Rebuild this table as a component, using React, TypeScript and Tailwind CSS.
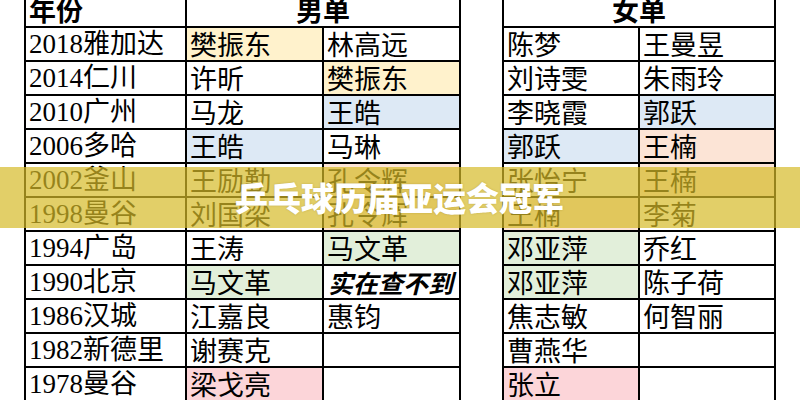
type Fill = 'none' | 'yellow' | 'blue' | 'green' | 'peach' | 'pink'

const fills: Record<Fill, string> = {
  none: 'bg-white',
  yellow: 'bg-[#fff2cc]',
  blue: 'bg-[#dde9f5]',
  green: 'bg-[#e2efda]',
  peach: 'bg-[#fce4d6]',
  pink: 'bg-[#fcd5d9]',
}

type Cell = { name: string; fill?: Fill; note?: boolean }

const rows: { year: string; men: [Cell, Cell]; women: [Cell, Cell] }[] = [
  { year: '2018雅加达', men: [{ name: '樊振东', fill: 'yellow' }, { name: '林高远' }], women: [{ name: '陈梦' }, { name: '王曼昱' }] },
  { year: '2014仁川', men: [{ name: '许昕' }, { name: '樊振东', fill: 'yellow' }], women: [{ name: '刘诗雯' }, { name: '朱雨玲' }] },
  { year: '2010广州', men: [{ name: '马龙' }, { name: '王皓', fill: 'blue' }], women: [{ name: '李晓霞' }, { name: '郭跃', fill: 'blue' }] },
  { year: '2006多哈', men: [{ name: '王皓', fill: 'blue' }, { name: '马琳' }], women: [{ name: '郭跃', fill: 'blue' }, { name: '王楠', fill: 'peach' }] },
  { year: '2002釜山', men: [{ name: '王励勤' }, { name: '孔令辉', fill: 'peach' }], women: [{ name: '张怡宁' }, { name: '王楠', fill: 'peach' }] },
  { year: '1998曼谷', men: [{ name: '刘国梁' }, { name: '孔令辉', fill: 'peach' }], women: [{ name: '王楠', fill: 'peach' }, { name: '李菊' }] },
  { year: '1994广岛', men: [{ name: '王涛' }, { name: '马文革', fill: 'green' }], women: [{ name: '邓亚萍', fill: 'green' }, { name: '乔红' }] },
  { year: '1990北京', men: [{ name: '马文革', fill: 'green' }, { name: '实在查不到', note: true }], women: [{ name: '邓亚萍', fill: 'green' }, { name: '陈子荷' }] },
  { year: '1986汉城', men: [{ name: '江嘉良' }, { name: '惠钧' }], women: [{ name: '焦志敏' }, { name: '何智丽' }] },
  { year: '1982新德里', men: [{ name: '谢赛克' }, { name: '' }], women: [{ name: '曹燕华' }, { name: '' }] },
  { year: '1978曼谷', men: [{ name: '梁戈亮', fill: 'pink' }, { name: '' }], women: [{ name: '张立', fill: 'pink' }, { name: '' }] },
]

function NameCell({ cell }: { cell: Cell }) {
  const fill = fills[cell.fill ?? 'none']
  if (cell.note) {
    return (
      <div className={`${fill} h-[32px] pl-[4px] text-[25px] leading-[32px] font-bold italic text-black whitespace-nowrap`}>
        {cell.name}
      </div>
    )
  }
  return <div className={`${fill} h-[32px] pl-[3px] text-[27px] leading-[32px] text-black whitespace-nowrap`}>{cell.name}</div>
}

export default function App() {
  return (
    <div className="relative w-[800px] h-[400px] overflow-hidden bg-white font-['Noto_Sans_CJK_SC',sans-serif]">
      <div className="flex items-start gap-[41px] pl-[24px] -mt-[8px]">
        {/* 年份 + 男单 */}
        <div className="grid grid-cols-[159px_135px_135px] gap-[2px] p-[2px] bg-black">
          <div className="bg-white h-[32px] pl-[3px] text-[27px] leading-[32px] font-bold">年份</div>
          <div className="col-span-2 bg-white h-[32px] text-center text-[27px] leading-[32px] font-bold">男单</div>
          {rows.map((r) => (
            <div key={r.year} className="contents">
              <div className="bg-white h-[32px] pl-[3px] text-[27px] leading-[32px] whitespace-nowrap font-['Liberation_Serif','Noto_Sans_CJK_SC',serif]">
                {r.year}
              </div>
              <NameCell cell={r.men[0]} />
              <NameCell cell={r.men[1]} />
            </div>
          ))}
        </div>

        {/* 女单 */}
        <div className="grid grid-cols-[134px_134px] gap-[2px] p-[2px] bg-black">
          <div className="col-span-2 bg-white h-[32px] text-center text-[27px] leading-[32px] font-bold">女单</div>
          {rows.map((r) => (
            <div key={r.year} className="contents">
              <NameCell cell={r.women[0]} />
              <NameCell cell={r.women[1]} />
            </div>
          ))}
        </div>
      </div>

      {/* 标题横幅 */}
      <div className="absolute left-0 right-0 top-[167px] h-[61px] flex items-center justify-center bg-[#d6ba28]/70">
        <span className="text-white text-[33px] font-black leading-none [text-shadow:0_0_2px_rgba(120,100,20,0.35)]">
          乒乓球历届亚运会冠军
        </span>
      </div>
    </div>
  )
}
